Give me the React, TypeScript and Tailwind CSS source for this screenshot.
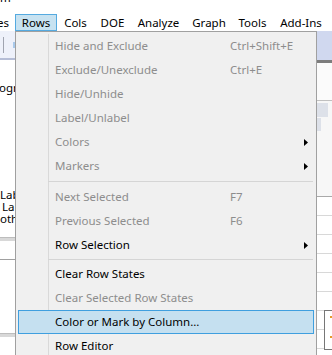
import React from "react";

type Item =
  | { kind: "item"; label: string; sc?: string; dis?: boolean; sub?: boolean; hi?: boolean }
  | { kind: "sep"; h: 5 | 7 };

const items: Item[] = [
  { kind: "item", label: "Hide and Exclude", sc: "Ctrl+Shift+E", dis: true },
  { kind: "item", label: "Exclude/Unexclude", sc: "Ctrl+E", dis: true },
  { kind: "item", label: "Hide/Unhide", dis: true },
  { kind: "item", label: "Label/Unlabel", dis: true },
  { kind: "item", label: "Colors", dis: true, sub: true },
  { kind: "item", label: "Markers", dis: true, sub: true },
  { kind: "sep", h: 7 },
  { kind: "item", label: "Next Selected", sc: "F7", dis: true },
  { kind: "item", label: "Previous Selected", sc: "F6", dis: true },
  { kind: "item", label: "Row Selection", sub: true },
  { kind: "sep", h: 5 },
  { kind: "item", label: "Clear Row States" },
  { kind: "item", label: "Clear Selected Row States", dis: true },
  { kind: "item", label: "Color or Mark by Column...", hi: true },
  { kind: "item", label: "Row Editor" },
];

function Arrow() {
  return (
    <svg width="4" height="7" viewBox="0 0 4 7" className="block">
      <path d="M0 0 L4 3.5 L0 7 Z" fill="#000" />
    </svg>
  );
}

function Menu() {
  return (
    <div className="absolute left-[15px] top-[31px] w-[302px] h-[340px] border border-[#a0a0a0] bg-[#f0f0f0] pt-[2px] px-[2px]">
      <div className="absolute left-[32px] top-[2px] bottom-0 w-px bg-[#d9d9d9]" />
      {items.map((it, i) =>
        it.kind === "sep" ? (
          <div
            key={i}
            className={`relative flex items-center pl-[30px] pr-px ${it.h === 7 ? "h-[7px]" : "h-[5px]"}`}
          >
            <div className="h-px flex-1 bg-[#d5d5d5]" />
          </div>
        ) : (
          <div
            key={i}
            className={`relative flex h-[24px] items-center pl-[37px] pr-[6px] whitespace-nowrap ${
              it.hi ? "bg-[#c5e0f0] shadow-[inset_0_0_0_1px_#3f9fdf]" : ""
            } ${it.dis ? "text-[#8d8d8d]" : "text-black"}`}
          >
            <span className="w-[175px] shrink-0">{it.label}</span>
            {it.sc && <span>{it.sc}</span>}
            {it.sub && (
              <span className="ml-auto">
                <Arrow />
              </span>
            )}
          </div>
        )
      )}
    </div>
  );
}

function MenuBar() {
  const rest: [string, string][] = [
    ["Cols", "w-[37px]"],
    ["DOE", "w-[37px]"],
    ["Analyze", "w-[55px]"],
    ["Graph", "w-[46px]"],
    ["Tools", "w-[41px]"],
    ["Add-Ins", "w-[56px]"],
  ];
  return (
    <div className="flex h-[17px] bg-white text-black">
      <div className="flex w-[15px] shrink-0 items-center justify-end overflow-hidden pr-[6px] whitespace-nowrap">
        Tables
      </div>
      <div className="flex w-[42px] shrink-0 items-center justify-center border border-[#55aae0] bg-[#c7e2f1]">
        Rows
      </div>
      {rest.map(([t, w]) => (
        <div key={t} className={`flex ${w} shrink-0 items-center justify-center whitespace-nowrap`}>
          {t}
        </div>
      ))}
    </div>
  );
}

function LeftCol() {
  return (
    <div className="flex w-[15px] shrink-0 flex-col overflow-hidden whitespace-nowrap">
      <div className="flex h-[27px] items-center bg-[#eef1fa]">
        <div className="ml-[3px] h-[16px] w-px bg-[#a0a4b0]" />
        <div className="ml-[9px] h-[6px] w-[2px] bg-[#a9c9ea]" />
      </div>
      <div className="h-[2px] bg-[#b5bdd6]" />
      <div className="h-[22px] bg-white" />
      <div className="h-[12px] leading-[12px] -ml-px">
        ogr<span className="text-[#e08a00]">a</span>
      </div>
      <div className="h-[95px]" />
      <div className="h-[12px] leading-[12px]">Label</div>
      <div className="h-[12px] leading-[12px] pl-[2px]">Label</div>
      <div className="h-[13px] leading-[12px]">other</div>
      <div className="h-[11px]" />
      <div className="h-px bg-[#bdbdbd]" />
      <div className="h-[3px] bg-[#d8d8d8]" />
      <div className="h-[18px]" />
      <div className="h-px bg-[#a0a0a0]" />
      <div className="h-[73px]" />
      <div className="h-px bg-[#bdbdbd]" />
      <div className="h-[3px] bg-[#d8d8d8]" />
      <div className="flex-1" />
    </div>
  );
}

function RightCol() {
  const rows = [0, 1, 2, 3, 4, 5, 6, 7];
  return (
    <div className="flex w-[15px] shrink-0 flex-col overflow-hidden">
      <div className="h-[29px] bg-[#d0d8ef]" />
      <div className="h-[3px] bg-[#7d7d7d]" />
      <div className="h-[37px] bg-[#fbfbfb]" />
      <div className="h-px bg-[#c0c0c0]" />
      <div className="flex h-[95px] flex-col bg-[#f7f7f7]">
        <div className="h-[2px]" />
        <div className="h-[14px] w-[11px] bg-[#dde1e9]" />
        <div className="h-px" />
        <div className="h-[13px] w-[4px] bg-[#dde1e9]" />
      </div>
      <div className="h-px bg-[#a9a9a9]" />
      <div className="relative flex flex-1 flex-col bg-white">
        {rows.map((r) => (
          <div key={r} className="flex h-[19px] flex-col">
            <div className="h-[18px]" />
            <div className="h-px bg-[#d8d8d8]" />
          </div>
        ))}
        <div className="absolute left-[7px] top-[113px] h-[40px] w-[12px] border border-[#777777] bg-white">
          <div className="ml-[5px] mt-[5px] h-[2px] w-[2px] bg-[#e69a2a]" />
          <div className="ml-[5px] mt-[18px] h-[2px] w-[2px] bg-[#e69a2a]" />
        </div>
      </div>
    </div>
  );
}

export default function App() {
  return (
    <div className="relative h-[355px] w-[332px] overflow-hidden bg-white font-['Noto_Sans',sans-serif] text-[11.5px] text-black">
      <div className="h-[14px] overflow-hidden">
        <div className="-mt-[10px] leading-[16px]">m</div>
      </div>
      <MenuBar />
      <div className="flex h-[324px]">
        <LeftCol />
        <div className="flex-1 bg-white" />
        <RightCol />
      </div>
      <Menu />
    </div>
  );
}
